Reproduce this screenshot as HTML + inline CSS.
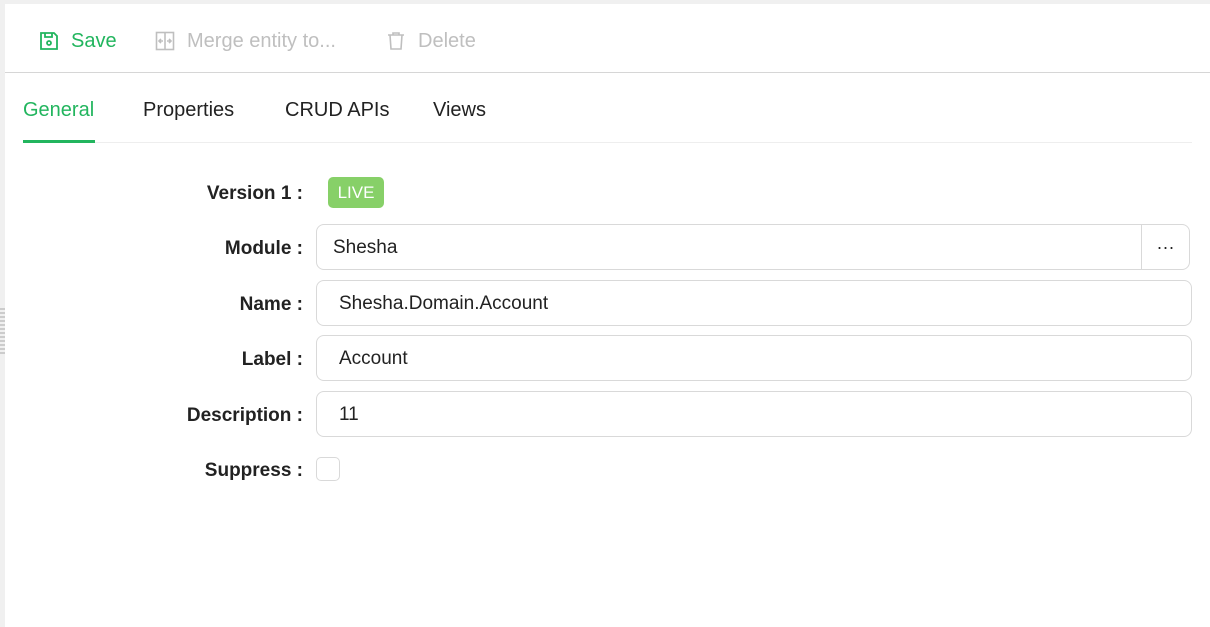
<!DOCTYPE html>
<html><head><style>
*{box-sizing:border-box;margin:0;padding:0}
body{width:1210px;height:627px;background:#f0f0f0;font-family:"Liberation Sans",sans-serif;position:relative;overflow:hidden}
.main{position:absolute;left:5px;top:4px;right:0;bottom:0;background:#fff}
.btn{position:absolute;top:24px;font-size:20px;display:flex;align-items:center;gap:12px;height:24px}
.tab{position:absolute;top:99px;font-size:20px;color:#222}
.abs{position:absolute}
.lbl{position:absolute;right:907px;font-size:19px;font-weight:bold;color:#222;width:300px;text-align:right}
.inp{position:absolute;left:316px;width:876px;height:46px;border:1px solid #d9d9d9;border-radius:8px;font-size:19px;color:#222;padding-left:22px;line-height:46px}
</style></head><body>
<div class="abs" style="left:0;top:308px;width:5px;height:48px;background:repeating-linear-gradient(#ccc 0 2px,transparent 2px 4px)"></div>
<div class="main"></div>
<div class="abs" style="left:5px;top:4px;right:0;height:69px;border-bottom:1px solid #d6d6d6"></div>
<div class="btn" style="left:39px;top:29px;color:#22b55e">
<svg width="20" height="20" viewBox="0 0 20 20" fill="none" stroke="#22b55e" stroke-width="1.8"><path d="M2 2h13l3 3v13H2z"/><path d="M6 2v4h7V2"/><circle cx="10" cy="12" r="2"/></svg>Save</div>
<div class="btn" style="left:155px;top:29px;color:#bfbfbf">
<svg width="20" height="20" viewBox="0 0 20 20" fill="none" stroke="#bfbfbf" stroke-width="1.6"><rect x="1.5" y="1.5" width="17" height="17"/><path d="M10 1.5v17M4 10h4M12 10h4M6 8l-2 2 2 2M14 8l2 2-2 2"/></svg>Merge entity to...</div>
<div class="btn" style="left:386px;top:29px;color:#bfbfbf">
<svg width="20" height="20" viewBox="0 0 20 20" fill="none" stroke="#bfbfbf" stroke-width="1.6"><path d="M2 4h16M7 4V2h6v2M4 4l1 14h10l1-14"/></svg>Delete</div>
<div class="tab" style="left:23px;color:#22b55e">General</div>
<div class="tab" style="left:143px">Properties</div>
<div class="tab" style="left:285px">CRUD APIs</div>
<div class="tab" style="left:433px">Views</div>
<div class="abs" style="left:23px;top:142px;width:1169px;height:1px;background:#eee"></div>
<div class="abs" style="left:23px;top:140px;width:72px;height:3px;background:#22b55e"></div>
<div class="lbl" style="top:183px">Version 1 :</div>
<div class="abs" style="left:328px;top:177px;width:56px;height:31px;background:#87d068;border-radius:5px;color:#fff;font-size:17px;text-align:center;line-height:31px">LIVE</div>
<div class="lbl" style="top:238px">Module :</div>
<div class="inp" style="top:224px;width:874px;padding-left:16px">Shesha<div class="abs" style="right:0;top:0;width:48px;height:44px;border-left:1px solid #d9d9d9;text-align:center;line-height:44px;font-size:18px">···</div></div>
<div class="lbl" style="top:294px">Name :</div>
<div class="inp" style="top:280px">Shesha.Domain.Account</div>
<div class="lbl" style="top:349px">Label :</div>
<div class="inp" style="top:335px">Account</div>
<div class="lbl" style="top:405px">Description :</div>
<div class="inp" style="top:391px">11</div>
<div class="lbl" style="top:460px">Suppress :</div>
<div class="abs" style="left:316px;top:457px;width:24px;height:24px;border:1px solid #d9d9d9;border-radius:5px"></div>
</body></html>
